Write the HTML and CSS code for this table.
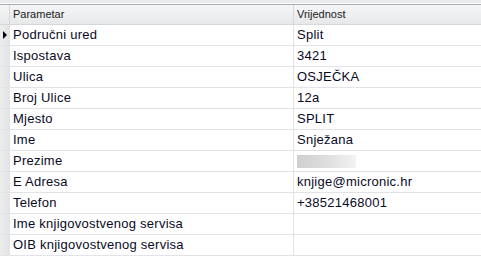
FILE: index.html
```html
<!DOCTYPE html>
<html>
<head>
<meta charset="utf-8">
<link rel="stylesheet" href="styles.css">
</head>
<body>
<div class="topstrip"></div>
<div class="grid">
  <div class="hrow">
    <div class="ind"></div>
    <div class="hc">Parametar</div>
    <div class="hc">Vrijednost</div>
  </div>
  <div class="row"><div class="ind"><span class="arrow"></span></div><div class="c">Područni ured</div><div class="c">Split</div></div>
  <div class="row"><div class="ind"></div><div class="c">Ispostava</div><div class="c">3421</div></div>
  <div class="row"><div class="ind"></div><div class="c">Ulica</div><div class="c">OSJEČKA</div></div>
  <div class="row"><div class="ind"></div><div class="c">Broj Ulice</div><div class="c">12a</div></div>
  <div class="row"><div class="ind"></div><div class="c">Mjesto</div><div class="c">SPLIT</div></div>
  <div class="row"><div class="ind"></div><div class="c">Ime</div><div class="c">Snježana</div></div>
  <div class="row"><div class="ind"></div><div class="c">Prezime</div><div class="c"><span class="blur"></span></div></div>
  <div class="row"><div class="ind"></div><div class="c">E Adresa</div><div class="c">knjige@micronic.hr</div></div>
  <div class="row"><div class="ind"></div><div class="c">Telefon</div><div class="c">+38521468001</div></div>
  <div class="row"><div class="ind"></div><div class="c">Ime knjigovostvenog servisa</div><div class="c"></div></div>
  <div class="row"><div class="ind"></div><div class="c">OIB knjigovostvenog servisa</div><div class="c"></div></div>
</div>
</body>
</html>
```
FILE: styles.css
```css
html, body {
  margin: 0;
  padding: 0;
  background: #ffffff;
}
body {
  width: 481px;
  height: 270px;
  overflow: hidden;
  font-family: "Liberation Sans", Arial, sans-serif;
  color: #000;
}
.topstrip {
  height: 3px;
  background: #ebebeb;
  border-bottom: 1px solid #ffffff;
}
.grid {
  display: flex;
  flex-direction: column;
}
.hrow, .row {
  display: grid;
  grid-template-columns: 9px 284px 1fr;
}
.hrow {
  height: 19px;
  border-top: 1px solid #a7adb5;
  border-bottom: 1px solid #d5d7da;
  background: linear-gradient(#f5f6f7, #e6e8ea);
}
.hc {
  font-size: 11px;
  line-height: 19px;
  padding-left: 3px;
  border-left: 1px solid #d5d7da;
  color: #1a1a1a;
  white-space: nowrap;
}
.hrow .ind {
  background: transparent;
}
.row {
  height: 20px;
  border-bottom: 1px solid #e1e3e7;
}
.ind {
  background: linear-gradient(90deg, #eceded, #e3e4e6);
  position: relative;
}
.c {
  font-size: 13px;
  line-height: 20px;
  letter-spacing: 0.25px;
  padding-left: 3px;
  border-left: 1px solid #e1e3e7;
  white-space: nowrap;
  overflow: hidden;
  color: #0a0a1e;
}
.arrow {
  position: absolute;
  left: 3px;
  top: 6px;
  width: 0;
  height: 0;
  border-top: 4px solid transparent;
  border-bottom: 4px solid transparent;
  border-left: 4px solid #000;
}
.blur {
  display: inline-block;
  width: 59px;
  height: 13px;
  margin-top: 4px;
  vertical-align: top;
  background: linear-gradient(90deg, #cfcfcf, #dedede 50%, #f3f3f3);
}
```
